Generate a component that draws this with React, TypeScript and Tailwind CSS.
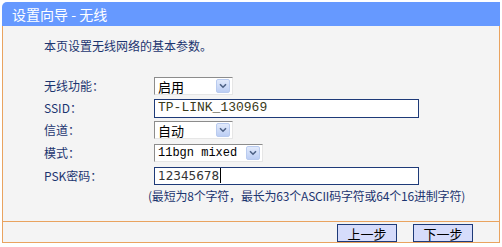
import React from "react"

const cjk = "font-['SimSun','Noto_Sans_CJK_SC',sans-serif]"

function Arrow() {
  return (
    <span className="ml-auto mr-[2px] flex h-[14px] w-[14px] items-center justify-center rounded-[2px] border border-[#b9cbef] bg-gradient-to-b from-[#e2eafb] to-[#bccef4]">
      <svg width="8" height="6" viewBox="0 0 8 6">
        <path d="M1 1.2 L4 4.2 L7 1.2" stroke="#4d6185" strokeWidth="1.6" fill="none" />
      </svg>
    </span>
  )
}

function Select({ value, width, mono }: { value: string; width: string; mono?: boolean }) {
  return (
    <div
      className={`flex h-[18px] items-center border border-t-[#8c8c8c] border-l-[#8c8c8c] border-r-[#e6e6e6] border-b-[#e6e6e6] bg-white pl-[3px] text-black ${width} ${
        mono ? "font-['Liberation_Mono',monospace] text-[12px]" : "font-['Noto_Sans_CJK_SC',sans-serif] text-[13px]"
      }`}
    >
      <span className="leading-none">{value}</span>
      <Arrow />
    </div>
  )
}

function Row({ label, h, children }: { label: string; h: string; children: React.ReactNode }) {
  return (
    <div className={`flex items-center ${h}`}>
      <div className="w-[151px] shrink-0 pl-[41px] text-[12px] text-[#1c3570]">{label}</div>
      {children}
    </div>
  )
}

export default function App() {
  return (
    <div className={`h-[247px] w-[502px] bg-white px-[2px] pt-[2px] ${cjk}`}>
      <div className="flex h-[24px] items-center rounded-tl-[5px] bg-[#6699ff] pl-[10px] text-[14px] text-white">
        设置向导 - 无线
      </div>
      <div className="h-[217px] border-x border-b border-[#e9a35f] bg-[#f4f4f4]">
        <div className="pl-[41px] pt-[12px] text-[12px] leading-[16px] text-[#1c3570]">本页设置无线网络的基本参数。</div>
        <div className="mt-[21px] flex flex-col">
          <Row label="无线功能：" h="h-[22px]">
            <Select value="启用" width="w-[79px]" />
          </Row>
          <Row label="SSID：" h="h-[22px]">
            <div className="flex h-[19px] w-[265px] items-center border border-[#1e3a78] bg-white pl-[3px] font-['Liberation_Mono',monospace] text-[13px] text-[#3a3a1a]">
              TP-LINK_130969
            </div>
          </Row>
          <Row label="信道：" h="h-[22px]">
            <Select value="自动" width="w-[79px]" />
          </Row>
          <Row label="模式：" h="h-[23px]">
            <Select value="11bgn mixed" width="w-[109px]" mono />
          </Row>
          <Row label="PSK密码：" h="h-[23px]">
            <div className="flex h-[18px] w-[265px] items-center border border-[#1e3a78] bg-white pl-[3px] font-['DejaVu_Sans',sans-serif] text-[12px] text-[#333]">
              12345678<span className="ml-[1px] h-[15px] w-px bg-black" />
            </div>
          </Row>
          <div className="flex h-[18px] items-center pl-[145px] text-[12px] tracking-[-0.2px] text-[#1c3570]">
            (最短为8个字符，最长为63个ASCII码字符或64个16进制字符)
          </div>
        </div>
        <div className="mt-[16px] border-t border-[#e9a35f]" />
        <div className="flex justify-end gap-[16px] pr-[26px] pt-[2px]">
          <button className="h-[18px] w-[60px] border border-[#1e3a78] bg-[#d6dcfb] text-[13px] leading-none text-black">上一步</button>
          <button className="h-[18px] w-[60px] border border-[#1e3a78] bg-[#d6dcfb] text-[13px] leading-none text-black">下一步</button>
        </div>
      </div>
    </div>
  )
}
